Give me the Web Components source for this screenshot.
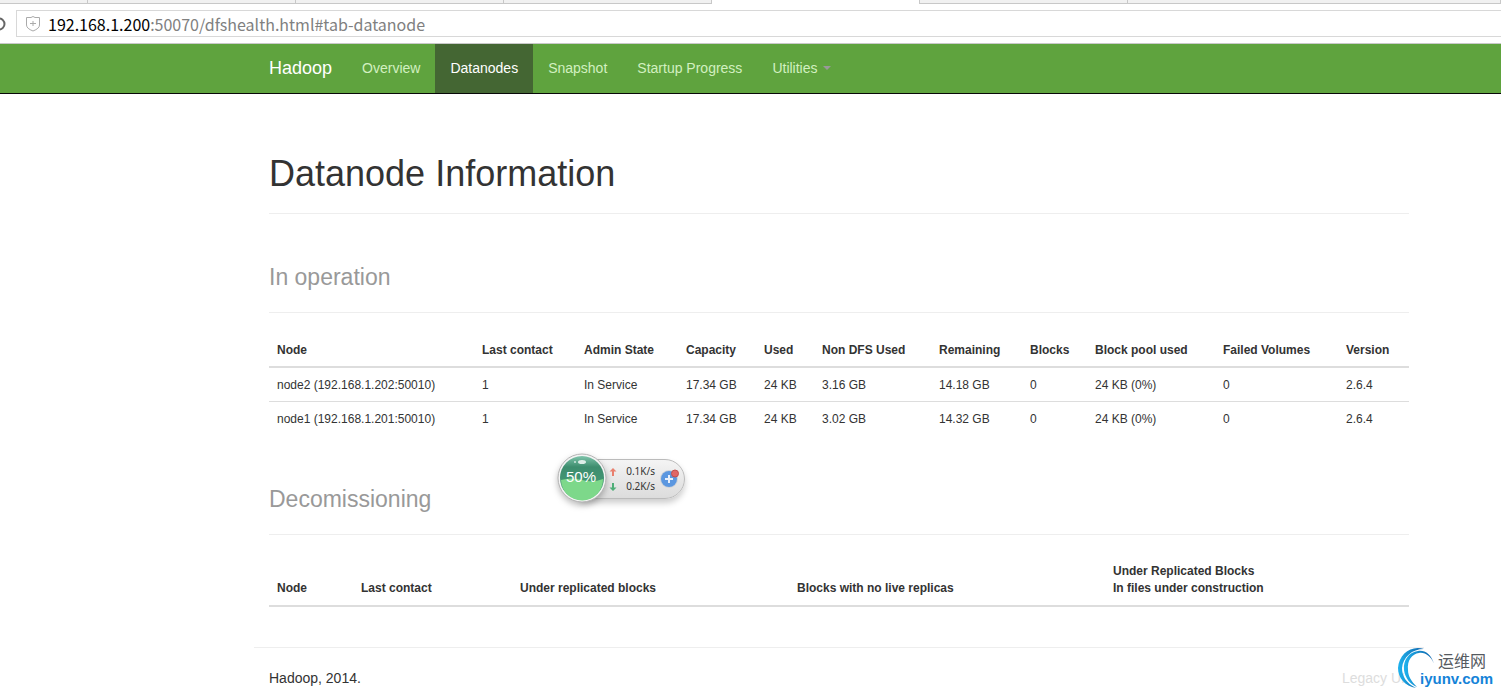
<!DOCTYPE html>
<html lang="en">
<head>
<meta charset="utf-8">
<title>Namenode information</title>
<style>
body { margin: 0; background: #fff; color: #333; font: 14px/20px "Liberation Sans", Arial, sans-serif; overflow: hidden; }
</style>
</head>
<body>
<dfs-page></dfs-page>
<script>
const define = (name, html, init) => {
  const t = document.createElement('template');
  t.innerHTML = html;
  customElements.define(name, class extends HTMLElement {
    constructor() {
      super();
      this.attachShadow({ mode: 'open' }).append(t.content.cloneNode(true));
    }
    connectedCallback() { if (init) init(this, this.shadowRoot); }
  });
};

define('browser-bar', `
<style>
:host { display: block; border-bottom: 1px solid #c9c9c9; background: #fff; }
.tabs { display: grid; grid-template-columns: 88px 208px 208px 208px 208px 208px 1fr; height: 4px; }
.tabs span { box-sizing: border-box; background: #f1f1f1; border: solid #c8c8c8; border-width: 0 1px 1px 0; }
.tabs .on { background: #fff; border-bottom: 0; }
.row { display: flex; align-items: center; gap: 10px; padding: 6px 0; }
.reload { display: block; width: 6px; height: 16px; flex: none; }
.field { display: flex; flex: 1; align-items: center; gap: 8px; height: 25px; padding-left: 9px; border: 1px solid #d8d8d8; border-right: 0; }
.field svg { flex: none; }
.url { font: 16px/24px "Noto Sans CJK SC", "Noto Sans", sans-serif; color: #808080; white-space: nowrap; text-decoration: none; }
.url b { font-weight: 400; color: #000; }
</style>
<div class="tabs"><span></span><span></span><span></span><span></span><span class="on"></span><span></span><span></span></div>
<div class="row">
  <svg class="reload" viewBox="0 0 6 16"><circle cx="-1" cy="8" r="5.500" fill="none" stroke="#666" stroke-width="2"/></svg>
  <div class="field">
    <svg width="14" height="16" viewBox="0 0 14 16" fill="none" stroke="#aaa"><path d="M.5 1.500H5L7 .5L9 1.500H13.500V9Q13.500 12.500 7 15Q.5 12.500 .5 9Z"/><path d="M4 7.500h6M7 5v5"/></svg>
    <a class="url" href="#tab-datanode"><b>192.168.1.200</b>:50070/dfshealth.html#tab-datanode</a>
  </div>
</div>`);

define('page-container', `
<style>
:host { display: grid; grid-template-columns: 254fr minmax(0, 1170px) 77fr; }
.in { grid-column: 2; }
</style>
<div class="in"><slot></slot></div>`);

define('nav-item', `
<style>
:host { display: block; }
a { display: flex; align-items: center; gap: 5px; height: 47px; padding: 0 15px 2px; color: #d2f0c0; text-decoration: none; }
:host([active]) a { background: #446633; color: #fff; }
i { display: none; border: 4px solid transparent; border-top-color: #999; border-bottom: 0; }
:host([menu]) i { display: block; }
</style>
<a href="#"><slot></slot><i></i></a>`);

define('nav-bar', `
<style>
:host { display: block; background: #5fa33e; border-bottom: 1px solid #080808; }
nav { display: flex; align-items: center; }
.brand { padding: 0 15px 2px; font-size: 18px; color: #fff; text-decoration: none; }
</style>
<page-container><nav>
  <a class="brand" href="#">Hadoop</a>
  <nav-item>Overview</nav-item>
  <nav-item active>Datanodes</nav-item>
  <nav-item>Snapshot</nav-item>
  <nav-item>Startup Progress</nav-item>
  <nav-item menu>Utilities</nav-item>
</nav></page-container>`);

define('page-header', `
<style>
:host { display: block; margin: 40px 0 20px; padding-bottom: 20px; border-bottom: 1px solid #eee; }
h1, h2 { margin: 0; font-weight: 400; font-size: 36px; line-height: 38px; }
h2 { padding-top: 8px; font-size: 23px; line-height: 30px; color: #999; }
</style>
<slot></slot>`, (el, root) => {
  if (root.querySelector('h1,h2')) return;
  const h = document.createElement(el.hasAttribute('sub') ? 'h2' : 'h1');
  h.append(root.querySelector('slot'));
  root.append(h);
});

define('data-grid', `
<style>
:host { display: block; }
table { width: 100%; table-layout: fixed; border-collapse: separate; border-spacing: 0; font-size: 12px; line-height: 17px; }
th, td { padding: 9px 8px 7px; text-align: left; white-space: nowrap; }
th { vertical-align: bottom; border-bottom: 2px solid #ddd; }
th.tall { padding: 8px; }
td { border-bottom: 1px solid #ddd; }
tr:last-child td { border-color: transparent; }
</style>
<table><colgroup></colgroup><thead></thead><tbody></tbody></table>`, (el, root) => {
  const { cols, rows } = grids[el.getAttribute('source')];
  const line = (cells, tag) => '<tr>' + cells.map(c => `<${tag}>${c}</${tag}>`).join('') + '</tr>';
  root.querySelector('colgroup').innerHTML = cols.map(c => `<col style="width:${c[1]}px">`).join('');
  root.querySelector('thead').innerHTML = line(cols.map(c => c[0]), 'th');
  root.querySelector('tbody').innerHTML = rows.map(r => line(r, 'td')).join('');
  if (!rows.length) root.querySelectorAll('th').forEach(th => th.classList.add('tall'));
});

define('page-footer', `
<style>
:host { display: flex; justify-content: space-between; margin: 40px -15px 0; padding: 20px 19px 20px 15px; border-top: 1px solid #eee; }
a { color: #ddd; text-decoration: none; }
</style>
<span>Hadoop, 2014.</span><a href="#">Legacy UI</a>`);

define('speed-widget', `
<style>
:host { position: absolute; left: 557px; top: 453px; display: flex; align-items: flex-end; width: 128px; height: 46px; }
.pill { box-sizing: border-box; display: grid; grid-template-columns: 8px 1fr 20px; column-gap: 5px; align-items: center; width: 104px; height: 40px; margin-left: 24px; padding: 4px 4px 4px 27px; border: 1px solid #bbb; border-radius: 0 20px 20px 0; background: linear-gradient(#f4f4f4, #dcdcdc); box-shadow: 0 4px 6px #0003; font: 10px/15px "Noto Sans", sans-serif; color: #333; }
.pill span { text-align: right; white-space: nowrap; }
.plus { grid-column: 3; grid-row: 1 / 3; }
.ball { position: absolute; left: 0; top: 0; filter: drop-shadow(0 3px 3px #0004); }
.pct { position: absolute; left: 0; top: 15px; width: 48px; text-align: center; font: 15px/18px "Liberation Sans", sans-serif; color: #fff; }
</style>
<div class="pill">
  <svg width="8" height="8" viewBox="0 0 8 8"><path d="M4 0L7.500 3.500H5V8H3V3.500H.5Z" fill="#e9806e"/></svg><span>0.1K/s</span>
  <svg width="8" height="8" viewBox="0 0 8 8"><path d="M4 8L.5 4.500H3V0H5V4.500H7.500Z" fill="#4fae78"/></svg><span>0.2K/s</span>
  <svg class="plus" width="20" height="20" viewBox="0 0 20 20"><circle cx="9" cy="10" r="9" fill="#cfd3d8"/><circle cx="9" cy="10" r="8" fill="#5b97e0"/><path d="M9 6v8M5 10h8" stroke="#e8f0fb" stroke-width="2"/><circle cx="15" cy="4.500" r="3.500" fill="#e06666" stroke="#c24e4e"/></svg>
</div>
<svg class="ball" width="50" height="50" viewBox="0 0 50 50">
  <defs><linearGradient id="g" x2="0" y2="1"><stop stop-color="#7fc4ab"/><stop offset=".25" stop-color="#3d8d6e"/><stop offset="1" stop-color="#4aa07a"/></linearGradient></defs>
  <circle cx="25" cy="25" r="24" fill="#f4f4f4" stroke="#b4b4b4"/>
  <circle cx="25" cy="25" r="22" fill="url(#g)"/>
  <path d="M4 27Q14 24 25 27T46 26A21 21 0 0 1 4 27Z" fill="#7dd88a"/>
  <ellipse cx="25" cy="9" rx="4" ry="2" fill="#fff" opacity=".8"/><circle cx="18" cy="9" r="1" fill="#fff" opacity=".7"/>
</svg>
<span class="pct">50%</span>`);

define('site-mark', `
<style>
:host { position: absolute; right: 5px; top: 646px; display: block; width: 99px; height: 45px; }
svg { position: absolute; left: 0; top: 0; }
.cn, .en { position: absolute; white-space: nowrap; }
.cn { left: 41px; top: 5px; font: 16px/18px "Noto Sans CJK SC", sans-serif; color: #555a60; }
.en { left: 23px; top: 24px; font: bold 15px/18px "Liberation Sans", sans-serif; color: #1583d8; }
</style>
<svg width="42" height="45" viewBox="0 0 42 45">
  <defs><linearGradient id="a" x2="1" y2="0"><stop stop-color="#1fb3ee"/><stop offset="1" stop-color="#0c5fa8"/></linearGradient></defs>
  <path d="M27 3C14-1 2 8 1 22C1 32 8 40 19 42C9 37 5 30 5 22C6 11 15 3 27 3Z" fill="url(#a)"/>
  <path d="M37 18C34 8 28 4 21 5C12 6 6 14 7 24C8 32 13 38 20 41C14 35 11 30 11 24C10 14 15 8 22 7C28 6 34 10 37 18Z" fill="url(#a)"/>
</svg>
<span class="cn">运维网</span><span class="en">iyunv.com</span>`);

const grids = {
  live: {
    cols: [['Node', 205], ['Last contact', 102], ['Admin State', 102], ['Capacity', 78], ['Used', 58], ['Non DFS Used', 117], ['Remaining', 91], ['Blocks', 65], ['Block pool used', 128], ['Failed Volumes', 123], ['Version', 71]],
    rows: [
      ['node2 (192.168.1.202:50010)', '1', 'In Service', '17.34 GB', '24 KB', '3.16 GB', '14.18 GB', '0', '24 KB (0%)', '0', '2.6.4'],
      ['node1 (192.168.1.201:50010)', '1', 'In Service', '17.34 GB', '24 KB', '3.02 GB', '14.32 GB', '0', '24 KB (0%)', '0', '2.6.4']
    ]
  },
  leaving: {
    cols: [['Node', 84], ['Last contact', 159], ['Under replicated blocks', 277], ['Blocks with no live replicas', 316], ['Under Replicated Blocks<br>In files under construction', 304]],
    rows: []
  }
};

define('dfs-page', `
<style>
:host { display: block; position: relative; }
main { padding: 21px 15px 0; }
</style>
<browser-bar></browser-bar>
<nav-bar></nav-bar>
<page-container><main>
  <page-header>Datanode Information</page-header>
  <page-header sub>In operation</page-header>
  <data-grid source="live"></data-grid>
  <page-header sub>Decomissioning</page-header>
  <data-grid source="leaving"></data-grid>
  <page-footer></page-footer>
</main></page-container>
<speed-widget></speed-widget>
<site-mark></site-mark>`);
</script>
</body>
</html>
